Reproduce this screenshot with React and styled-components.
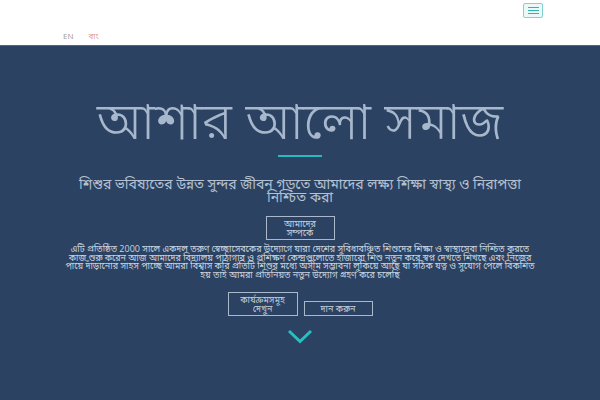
import styled, { createGlobalStyle } from "styled-components";

const GlobalStyle = createGlobalStyle`
	html, body {
		margin: 0;
		padding: 0;
		height: 100%;
		background: #2c4262;
		font-family: "Open Sans", "Noto Sans Bengali", sans-serif;
	}
	#root {
		min-height: 100%;
	}
`;

// --------------------------------------------------

const Header = styled.header`
	background: #fff;
	height: 45px;
	box-sizing: border-box;
	padding: 3px 57px 0 63px;
	display: flex;
	flex-direction: column;
`;

const TopBar = styled.div`
	display: flex;
	justify-content: flex-end;
`;

const Burger = styled.button`
	width: 20px;
	height: 15px;
	padding: 0;
	border: 1px solid #7fd3d3;
	border-radius: 2px;
	background: #eaf8f8;
	display: flex;
	flex-direction: column;
	align-items: center;
	justify-content: center;
	gap: 2px;
	cursor: pointer;

	span {
		display: block;
		width: 11px;
		height: 1px;
		background: #2fb3b3;
	}
`;

const Langs = styled.div`
	margin-top: 13px;
	display: flex;
	gap: 15px;
	font-size: 8px;
	line-height: 10px;
`;

const Lang = styled.a`
	color: ${({ active }) => (active ? "#e49c84" : "#9a9a9a")};
	text-decoration: none;
`;

// --------------------------------------------------

const Hero = styled.section`
	border-top: 1px solid #4d6787;
	background: #2c4262;
	height: 355px;
	box-sizing: border-box;
	padding-top: 48px;
	display: flex;
	flex-direction: column;
	align-items: center;
	text-align: center;
	color: #c9d3df;
`;

const Title = styled.h1`
	margin: 0;
	font-size: 52px;
	font-weight: 300;
	line-height: 50px;
	color: #a7b7cc;
`;

const Rule = styled.div`
	width: 44px;
	height: 2px;
	background: #27b9bd;
	margin: 11px 0 20px;
`;

const Lead = styled.p`
	margin: 0;
	max-width: 450px;
	font-size: 14px;
	line-height: 13px;
	color: #b3c0d1;
`;

const Button = styled.a`
	display: block;
	box-sizing: border-box;
	width: ${({ wide }) => (wide ? "70px" : "69px")};
	padding: 2px 9px;
	border: 1px solid #a9b8cb;
	color: #c3cedb;
	font-size: 9px;
	line-height: 9px;
	text-decoration: none;
	text-align: center;
`;

const Intro = styled(Button)`
	margin-top: 13px;
`;

const Body = styled.p`
	margin: 5px 0 0;
	max-width: 478px;
	font-size: 9px;
	line-height: 8.7px;
`;

const Actions = styled.div`
	margin-top: 12px;
	display: flex;
	align-items: flex-end;
	gap: 6px;
`;

const Chevron = styled.svg`
	margin-top: 13px;
	width: 26px;
	height: 15px;
`;

// --------------------------------------------------

const App = () => (
	<>
		<GlobalStyle />
		<Header>
			<TopBar>
				<Burger aria-label="menu">
					<span />
					<span />
					<span />
				</Burger>
			</TopBar>
			<Langs>
				<Lang href="#">EN</Lang>
				<Lang href="#" active>বাং</Lang>
			</Langs>
		</Header>

		<Hero>
			<Title>আশার আলো সমাজ</Title>
			<Rule />
			<Lead>
				শিশুর ভবিষ্যতের উন্নত সুন্দর জীবন গড়তে আমাদের লক্ষ্য শিক্ষা স্বাস্থ্য ও
				নিরাপত্তা নিশ্চিত করা
			</Lead>
			<Intro href="#">আমাদের সম্পর্কে</Intro>
			<Body>
				এটি প্রতিষ্ঠিত 2000 সালে একদল তরুণ স্বেচ্ছাসেবকের উদ্যোগে যারা দেশের
				সুবিধাবঞ্চিত শিশুদের শিক্ষা ও স্বাস্থ্যসেবা নিশ্চিত করতে কাজ শুরু করেন আজ
				আমাদের বিদ্যালয় পাঠাগার ও প্রশিক্ষণ কেন্দ্রগুলোতে হাজারো শিশু নতুন করে স্বপ্ন
				দেখতে শিখছে এবং নিজের পায়ে দাঁড়ানোর সাহস পাচ্ছে আমরা বিশ্বাস করি প্রতিটি
				শিশুর মধ্যে অসীম সম্ভাবনা লুকিয়ে আছে যা সঠিক যত্ন ও সুযোগ পেলে বিকশিত হয়
				তাই আমরা প্রতিনিয়ত নতুন উদ্যোগ গ্রহণ করে চলেছি
			</Body>
			<Actions>
				<Button href="#" wide>কার্যক্রমসমূহ দেখুন</Button>
				<Button href="#">দান করুন</Button>
			</Actions>
			<Chevron viewBox="0 0 26 15" fill="none">
				<path d="M2 2 L13 12.5 L24 2" stroke="#27c0c0" strokeWidth="3" />
			</Chevron>
		</Hero>
	</>
);

export default App;
